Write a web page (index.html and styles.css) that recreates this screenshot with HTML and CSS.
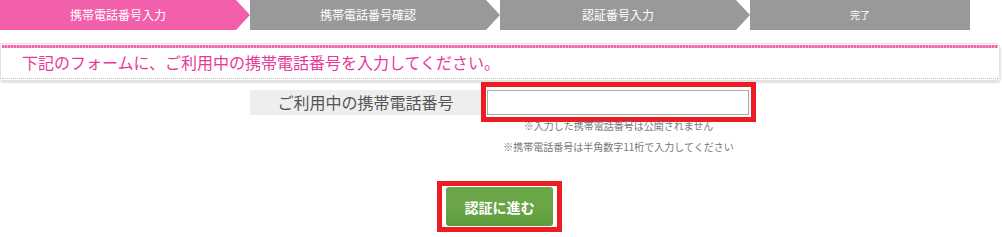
FILE: index.html
```html
<!DOCTYPE html>
<html lang="ja">
<head>
    <meta charset="UTF-8">
    <title>携帯電話番号入力</title>
    <link rel="stylesheet" href="styles.css">
</head>
<body>
    <!-- Steps -->
    <ol class="steps">
        <li class="step is-current">携帯電話番号入力</li>
        <li class="step">携帯電話番号確認</li>
        <li class="step">認証番号入力</li>
        <li class="step step-last">完了</li>
    </ol>

    <!-- Notice -->
    <div class="notice">
        <p class="notice-text">下記のフォームに、ご利用中の携帯電話番号を入力してください。</p>
    </div>

    <!-- Form -->
    <form class="tel-form">
        <div class="form-row">
            <div class="form-label">ご利用中の携帯電話番号</div>
            <div class="form-field">
                <div class="highlight field-frame">
                    <input class="tel-input" type="text">
                </div>
                <p class="note note-first">※入力した携帯電話番号は公開されません</p>
                <p class="note">※携帯電話番号は半角数字11桁で入力してください</p>
            </div>
        </div>
        <div class="submit-area">
            <div class="highlight button-frame">
                <button class="submit-btn" type="button">認証に進む</button>
            </div>
        </div>
    </form>
</body>
</html>
```

FILE: styles.css
```css
:root {
    --step-pink: #f25fab;
    --step-gray: #999999;
    --text-pink: #e8389a;
    --mark-red: #ec1c24;
    --btn-green: #6aa647;
    --btn-green-dark: #5d9a3c;
}

* {
    margin: 0;
    padding: 0;
    box-sizing: border-box;
}

body {
    font-family: "Noto Sans CJK JP", "Noto Sans", sans-serif;
    background: #fff;
    width: 1002px;
    overflow: hidden;
}

/* Steps */
.steps {
    display: flex;
    list-style: none;
    height: 30px;
}

.step {
    width: 250px;
    height: 30px;
    padding-right: 14px;
    background: var(--step-gray);
    color: #fff;
    font-size: 12px;
    line-height: 30px;
    text-align: center;
    clip-path: polygon(0 0, 236px 0, 250px 50%, 236px 100%, 0 100%);
}

.step.is-current {
    background: var(--step-pink);
}

.step-last {
    width: 220px;
    padding-right: 0;
    font-size: 10px;
    clip-path: none;
}

/* Notice */
.notice {
    margin-top: 13px;
    width: 1000px;
    padding: 1px;
    border: 1px solid #e3e3e3;
    border-radius: 0 4px 4px 0;
    box-shadow: 1px 2px 2px rgba(0, 0, 0, 0.12);
}

.notice::before {
    content: '';
    display: block;
    height: 3px;
    background: repeating-linear-gradient(90deg, #f462ad 0, #f462ad 2px, #f9a6d1 2px, #f9a6d1 3px);
}

.notice-text {
    border-bottom: 1px dotted #bdbdbd;
    padding-left: 20px;
    height: 31px;
    line-height: 29px;
    font-size: 16px;
    color: var(--text-pink);
}

/* Form */
.tel-form {
    padding-left: 250px;
}

.form-row {
    display: flex;
    align-items: flex-start;
    margin-top: 1px;
}

.form-label {
    width: 231px;
    height: 25px;
    margin-top: 8px;
    background: #eeeeee;
    color: #555;
    font-size: 16px;
    line-height: 25px;
    text-align: center;
}

.form-field {
    width: 275px;
    text-align: center;
}

.highlight {
    border: 5px solid var(--mark-red);
}

.field-frame {
    padding: 3px 2px 2px 1px;
}

.tel-input {
    display: block;
    width: 262px;
    height: 25px;
    border: 1px solid #aaaaaa;
    background: #fff;
    outline: none;
}

.note {
    font-size: 10px;
    line-height: 12px;
    color: #777;
    white-space: nowrap;
    margin-top: 9px;
}

.note.note-first {
    margin-top: -2px;
}

.submit-area {
    width: 125px;
    margin: 28px 0 0 187px;
}

.button-frame {
    padding: 1px 4px;
}

.submit-btn {
    display: block;
    width: 107px;
    height: 39px;
    border: none;
    border-radius: 3px;
    background: linear-gradient(to bottom, var(--btn-green) 0%, var(--btn-green) 55%, var(--btn-green-dark) 100%);
    color: #fff;
    font-family: inherit;
    font-size: 14px;
    font-weight: 700;
}
```
